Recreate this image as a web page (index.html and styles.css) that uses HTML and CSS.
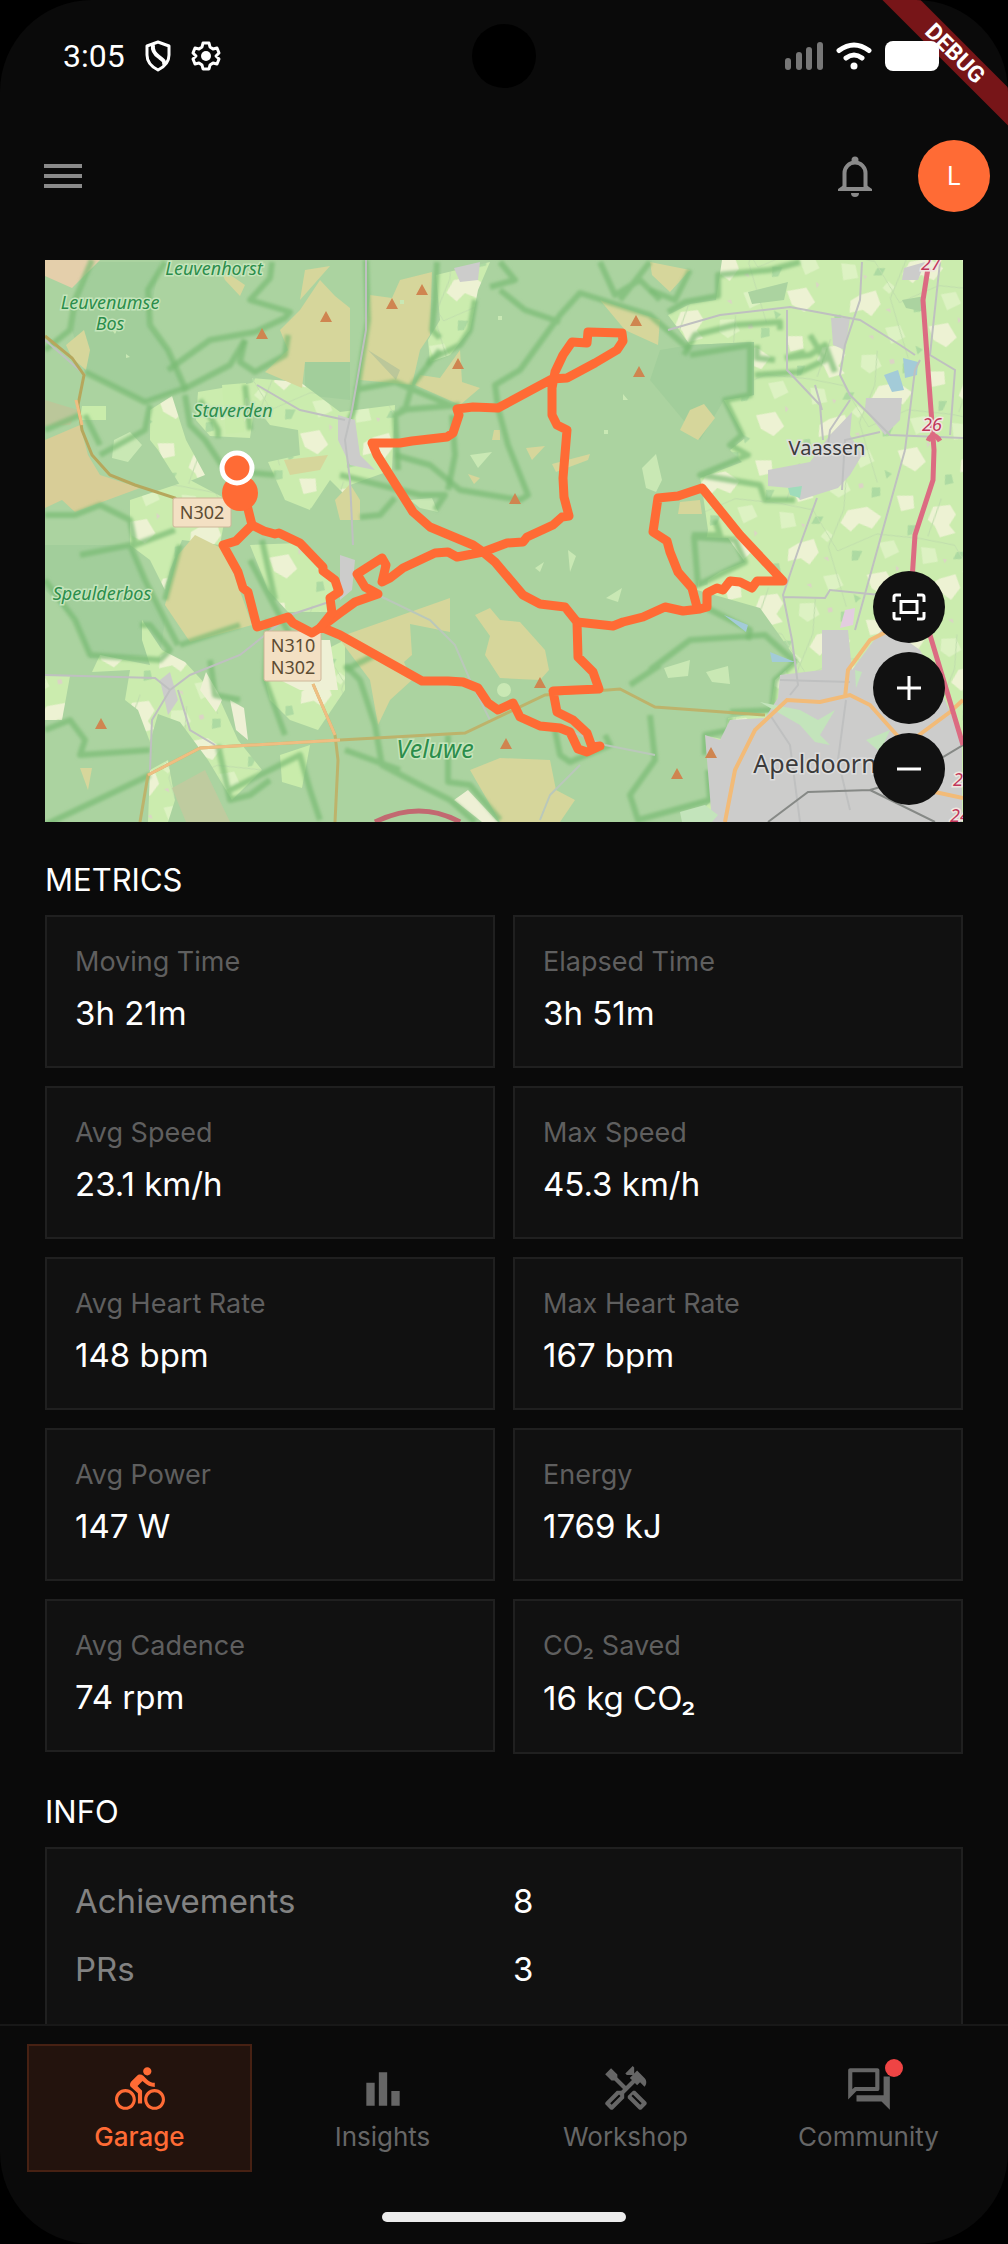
FILE: index.html
```html
<!DOCTYPE html>
<html lang="en">

<head>
    <meta charset="UTF-8">
    <meta name="viewport" content="width=device-width, initial-scale=1.0">
    <title>Ride details</title>
    <link rel="stylesheet" href="styles.css">
</head>

<body>
    <div class="screen">
        <div class="status-bar">
            <div class="status-left">
                <span class="time">3:05</span>
                <svg class="shield" viewBox="0 0 26 32" fill="none" stroke="#fff" stroke-width="3" stroke-linejoin="round">
                    <path d="M13 2L24 6V15C24 22 19 27 13 30C7 27 2 22 2 15V6Z" />
                    <path d="M8 5C7 11 10 14 14 17C18 20 20 21 19 25" stroke-width="4" />
                </svg>
                <svg class="gear" viewBox="0 0 30 30" fill="none" stroke="#fff" stroke-width="3" stroke-linejoin="round">
                    <path d="M12 2H18L19 6L22 8L26 7L28 12L25 15L28 18L26 23L22 22L19 24L18 28H12L11 24L8 22L4 23L2 18L5 15L2 12L4 7L8 8L11 6Z" />
                    <circle cx="15" cy="15" r="5" fill="#fff" stroke="none" />
                </svg>
            </div>
            <div class="camera"></div>
            <div class="status-right">
                <svg class="signal" viewBox="0 0 38 28" fill="#777">
                    <rect x="0" y="16" width="6" height="12" rx="3" />
                    <rect x="11" y="10" width="6" height="18" rx="3" />
                    <rect x="21" y="5" width="6" height="23" rx="3" />
                    <rect x="32" y="0" width="6" height="28" rx="3" />
                </svg>
                <svg class="wifi" viewBox="0 0 36 28" fill="none" stroke="#fff" stroke-width="5" stroke-linecap="round">
                    <path d="M3 8.500Q18 -2.500 33 8.500" />
                    <path d="M10 16Q18 10 26 16" />
                    <circle cx="18" cy="24" r="3.500" fill="#fff" stroke="none" />
                </svg>
                <span class="battery"></span>
            </div>
        </div>
        <div class="debug">DEBUG</div>

        <header class="app-bar">
            <button class="menu-button" aria-label="Menu">
                <svg viewBox="0 0 38 26" fill="#8a8a8a">
                    <path d="M0 1H38V5H0ZM0 11H38V15H0ZM0 21H38V25H0Z" />
                </svg>
            </button>
            <div class="actions">
                <button class="bell-button" aria-label="Notifications">
                    <svg viewBox="0 0 34 41" fill="#8a8a8a">
                        <circle cx="17" cy="4" r="3.500" />
                        <path d="M6.500 32V17A10.500 10.500 0 0 1 27.500 17V32" fill="none" stroke="#8a8a8a" stroke-width="4" />
                        <path d="M0 35V33L5 29.500V31H29V29.500L34 33V35Z" />
                        <path d="M13 37H21A4 4 0 0 1 13 37Z" />
                    </svg>
                </button>
                <button class="avatar">L</button>
            </div>
        </header>

        <main class="content">
            <div class="map">
                <svg class="map-tiles" viewBox="45 260 918 562" preserveAspectRatio="xMidYMid slice">
                    <defs>
                        <pattern id="fields" width="146" height="128" patternUnits="userSpaceOnUse" patternTransform="rotate(14)">
                            <rect width="146" height="128" fill="#cbecae" />
                            <path d="M6 10L22 4L30 12L26 24L34 30L20 38L12 28L4 24ZM70 34L88 26L104 32L98 46L84 44L78 54L66 48ZM30 78L44 70L52 82L46 96L36 92L24 98L22 86ZM104 92L122 84L134 96L126 108L112 104ZM114 8L130 4L134 16L122 22Z" fill="#edf2d3" />
                            <path d="M46 8L60 4L68 14L58 24L48 20ZM108 58L122 52L130 62L118 72ZM4 52L18 50L24 62L10 68ZM62 104L76 98L84 108L72 118ZM54 58L62 62L58 70L50 66Z" fill="#ddf2c3" />
                            <path d="M88 6L96 4L98 12L90 16ZM40 48L48 46L46 54L38 56ZM84 72L94 70L92 80L86 82ZM10 104L16 102L20 110L12 114ZM132 34L140 32L138 42L134 44ZM96 114L104 116L100 122Z" fill="#addaa2" />
                            <path d="M74 6L78 4L80 8L76 10ZM58 86L62 84L64 88ZM130 76L134 78L132 82ZM28 58L32 58L31 62ZM48 116L52 114L54 118Z" fill="#dcd3c6" />
                            <path d="M0 44L36 42L70 76L104 50L146 44M60 0L66 34L60 74L92 128M12 0L8 40" fill="none" stroke="#c0ddad" />
                        </pattern>
                        <filter id="soft" x="-5%" y="-5%" width="110%" height="110%">
                            <feGaussianBlur stdDeviation="1.500" />
                        </filter>
                    </defs>
                    <rect x="45" y="260" width="918" height="562" fill="url(#fields)" />

                    <!-- woods -->
                    <g fill="#abd3a0">
                        <path d="M45 260H722L716 300L690 304L668 315L690 345L754 342V395L724 400L745 438L730 450L742 462L700 478L702 488L708 530L697 590L760 608L797 660L775 680L770 712L728 718L725 740L705 735L712 800L690 822H45Z" />
                        <path d="M694 537L728 538L745 562L720 572L700 585Z" />
                        <path d="M748 292L788 282L784 300L752 304Z" />
                        <path d="M902 300L925 296V312L906 308Z" />
                    </g>
                    <g fill="#a2ce9b">
                        <path d="M92 262H160L148 325L168 350L185 388L145 402L85 372L72 330L76 300Z" />
                        <path d="M45 545L130 545L145 580L165 620L160 655L90 658L75 620L45 590Z" />
                        <path d="M690 345L754 342V395L724 400L700 440L650 380L660 350Z" />
                        <path d="M305 360L350 356V400L305 395Z" />
                    </g>
                    <g fill="url(#fields)">
                        <path d="M252 378L300 382L340 412L395 405L392 470L350 485L350 500L330 480L310 510L285 500L268 462L300 455L298 430L270 425L250 400Z" />
                        <path d="M198 392L258 382L250 438L210 436L196 420Z" />
                        <path d="M130 500L190 480L228 500L220 545L182 540L170 570L165 590L150 560L130 545Z" />
                        <path d="M250 545L300 543L335 582L330 612L288 612L268 590Z" />
                        <path d="M150 410L172 396L186 440L205 475L180 485L158 450L150 440Z" />
                        <path d="M142 620L162 650L185 662L220 700L238 740L262 770L232 800L208 760L180 722L158 714L150 742L138 710L125 700L130 670L92 672L100 655L150 665L142 640Z" />
                        <path d="M265 680L345 640V690L318 730L290 720L270 700Z" />
                        <path d="M436 275L490 262L478 290L470 330L450 355L430 362L428 340L440 320Z" />
                        <path d="M45 675L70 676L62 720L45 720Z" />
                        <path d="M150 770L168 760L175 800L168 822H148Z" />
                    </g>
                    <path d="M82 406H106V420H80ZM280 755L310 745L302 788L282 782ZM222 385L246 383L244 432L226 434Z" fill="#c9ecab" />
                    <path d="M454 800L468 790L498 822H482ZM268 665L300 640L330 640L338 690L300 690L280 680ZM206 672L222 700L216 712L200 690ZM230 700L244 708L248 740L236 730Z" fill="#eef0d5" />

                    <!-- heath and sand -->
                    <g fill="#d6d69b">
                        <path d="M178 555L195 535L225 550L245 605L252 625L190 642L165 605Z" />
                        <path d="M45 440L80 425L88 455L100 475L140 488L75 512L62 500L45 508Z" fill="#d8cd97" />
                        <path d="M45 260H100L72 288L45 276Z" fill="#e4cfab" />
                        <path d="M66 345L84 330L90 350L86 370L72 358Z" />
                        <path d="M280 330L300 310L320 280L335 296L350 308V362H305L302 388L265 372L288 350Z" />
                        <path d="M370 295L392 298L400 280L432 272L430 335L420 350L412 385L360 380Z" />
                        <path d="M420 375L440 378L460 350L462 382L480 388L460 405L415 385Z" />
                        <path d="M345 635L450 598V632L410 624L412 655L404 662L412 680L390 700L378 725L370 680L340 640Z" />
                        <path d="M475 615L490 608L500 620L520 622L545 650L549 670L540 680L500 678L485 655L490 636Z" />
                        <path d="M470 770L500 758L550 760L556 790L575 800L560 822H500Z" />
                        <path d="M650 262L690 270L670 292L652 275ZM600 300L660 320L658 345L625 330ZM220 268L245 285L240 296L225 280ZM305 270L330 266L300 300Z" />
                        <path d="M690 410L704 404L715 418L698 440L680 430Z" />
                        <path d="M335 500L350 484L360 500V520L340 520Z" />
                        <path d="M80 768L92 768L88 790ZM680 502L700 500L702 514L678 514ZM526 448L545 446L532 460ZM284 460L328 455L320 470L290 475ZM468 474L480 478L474 484ZM552 464L590 454L588 460L556 472ZM494 430H500V440H492Z" />
                    </g>
                    <path d="M172 788L205 770L230 822H186Z" fill="#bfcb9f" />
                    <path d="M368 350L400 370L396 380ZM45 400L78 410L70 425L45 426Z" fill="#bbc79a" />

                    <!-- pale clearings -->
                    <g fill="#c9e8b4">
                        <path d="M470 455L492 452L478 468ZM535 568L544 562L540 572ZM568 550L576 556L570 572ZM606 598L622 588L618 602ZM664 668L690 660L688 676L668 678ZM706 672L728 666L730 684L712 682Z" />
                        <path d="M497 690A6 6 0 1 0 511 690A6 6 0 1 0 497 690ZM126 354L130 357L126 358ZM112 330L118 328L115 334ZM400 300H404V304H400ZM498 316H502V320H498ZM623 394L628 400H623ZM604 430H608V434H604Z" />
                        <path d="M642 468L656 454L662 480L656 492L646 488ZM114 440L130 432L142 445L128 462L112 458ZM410 500L432 498L438 512L420 508Z" />
                    </g>

                    <!-- reserve outlines -->
                    <g fill="none" stroke="#79ba74" stroke-width="6" stroke-opacity=".7" stroke-linejoin="round" filter="url(#soft)">
                        <path d="M92 260L75 300L70 330L45 350M85 372L145 402L185 388L168 350L150 325L148 290L165 262" />
                        <path d="M168 370L210 340L255 332L285 318L290 312L250 300L270 278L272 262M245 340L240 362L255 372L285 355L288 335" />
                        <path d="M182 390L230 365L245 340M185 395L190 425L205 440L225 470L275 475M200 400L218 430L218 438M245 385L250 430" />
                        <path d="M45 430L80 415M85 415L100 445M100 455L145 430L150 405M45 515L75 515L100 505L130 520L135 545L175 530" />
                        <path d="M80 555L130 545L145 580L165 620L178 645M45 580L75 620L90 655L160 660L170 650L150 625L140 625M180 645L240 625M180 545L165 600" />
                        <path d="M45 730L70 720L85 740L80 755L150 750M45 825L150 775M210 660L215 695L240 700M250 560L290 635M262 540L275 600" />
                        <path d="M268 620L265 680L285 735M218 745L230 800L250 795L270 780M230 790L300 755L310 790L320 820" />
                        <path d="M366 260L368 320L354 410L345 430M354 390L395 382L450 405M400 410L460 405M440 350L412 385L405 410L395 415L398 470M452 415L455 455L448 490" />
                        <path d="M498 408L508 445L528 495L520 500L460 490L430 465L395 455M498 408L495 385L520 370L560 315L580 293L650 315L690 350M500 290L525 310L560 322" />
                        <path d="M437 262L435 300L432 330L440 338M475 300L470 330L460 345L430 360L428 365M500 262L515 280L490 287" />
                        <path d="M340 475L420 495L445 495L435 510M360 517L380 515L395 498M600 262L615 295L640 280L660 300M620 300L650 262" />
                        <path d="M650 290L675 300L690 270M668 312L685 302L718 296V275L770 270L800 262M684 355L695 335L735 325L780 322V330M690 355L750 345V395L725 400L742 435L730 445L748 455L700 475L760 485L765 500L795 500" />
                        <path d="M757 345V358L775 360M785 358L810 355L825 345L835 372M755 375L800 372L825 360L810 335M785 358L805 352" />
                        <path d="M694 537L698 585L745 562L735 540ZM692 535L720 535L715 520M707 608L750 630L748 640" />
                        <path d="M650 670L690 640L765 635L795 662L775 680L772 710L730 712M650 715L655 760L630 795L638 820L710 800L708 770M630 685L660 665" />
                        <path d="M345 665L360 680L375 725L382 765L420 785L450 800L475 822M448 735V782L470 785L500 820M345 750L400 770M555 730L560 755L570 762L610 745L605 735" />
                        <path d="M730 718V730L705 735V755M345 670L375 655" />
                    </g>

                    <!-- towns -->
                    <g fill="#cccccb">
                        <path d="M338 415L355 420L360 455L375 470L350 465L338 440Z" />
                        <path d="M340 555L355 560L352 590L340 600ZM160 680L170 672L178 700L168 715ZM454 268L480 262L478 280L460 282Z" />
                        <path d="M866 398L902 398L900 420L885 435L865 410ZM830 435L852 412L850 435L862 455L850 475L838 488L800 500L790 488L768 486V470L810 462Z" />
                        <path d="M831 318H850L845 350L833 345ZM904 268L925 262L918 280L902 280Z" />
                        <path d="M822 630L848 630L852 670L885 625L920 650L945 700L962 740V822H712L705 735L720 740L730 720L765 718L778 698L780 675L822 670Z" />
                    </g>
                    <g fill="#c3e4bb">
                        <path d="M760 702L800 710L818 720L835 710L820 735L830 745L815 742L800 725ZM855 670L862 672L856 688ZM866 740L890 730L880 752ZM680 812L705 805L718 815L712 822H682Z" />
                    </g>
                    <path d="M903 358L918 362L917 375L905 378ZM884 375L898 370L904 390L892 392ZM724 615L748 625L746 632ZM770 652L795 662L772 662Z" fill="#a3cbd8" />
                    <path d="M845 610L855 608L853 625L840 628Z" fill="#e3cde0" />
                    <path d="M788 488L802 486L800 498L790 495Z" fill="#9fdcbb" />

                    <!-- minor roads -->
                    <g fill="none" stroke="#bfc0c0" stroke-width="2">
                        <path d="M366 260L366 330L352 410L345 440L350 480L353 545M257 385L300 410L345 420" />
                        <path d="M45 675L155 678L170 690L190 675L240 655L265 635L290 615L335 600M170 690L152 720L150 770M178 690L190 730L215 745" />
                        <path d="M380 596L430 620L455 645L470 680L490 720M555 725L605 745L655 755M580 765L550 795L540 820" stroke="#bac8ba" />
                        <path d="M668 330L720 315L790 307L860 320L900 345L915 355M862 262L860 300L845 345L840 375L850 395L890 435L963 438M850 400L830 430L828 445M815 385L822 410M787 310V370L820 405L823 440" />
                        <path d="M817 498L800 545L783 595L792 640L798 685L790 695M905 450L880 540L855 630M783 597L825 598L830 590L880 595M842 490L845 440L880 432" />
                        <path d="M846 700L838 760L850 810M770 715L790 745L800 822M780 680L850 682M920 360L915 370L905 450M940 262L930 355L955 370L950 435" />
                        <path d="M45 340L85 375" />
                    </g>
                    <path d="M768 822L808 792L870 790L905 780L963 745M870 790L935 822" fill="none" stroke="#868986" stroke-width="2" />

                    <!-- main roads -->
                    <g fill="none" stroke="#d0b365" stroke-width="3">
                        <path d="M45 336L72 358L84 375L78 405L82 430L92 455L110 475L135 485L175 498L180 505" stroke="#b6a75c" />
                        <path d="M313 684L335 735L338 760L335 822M140 822L148 775L200 748L340 740L465 733L545 695L620 689L655 707L765 715" stroke="#bdb36b" />
                        <path d="M200 748L340 740M313 684L335 735M148 775L200 748M76 400L82 425" stroke="#efbe82" />
                    </g>
                    <path d="M725 822L735 770L755 730L787 700L820 702L850 695L870 705L895 733L910 750M845 697L848 670L870 640L900 625M915 738L950 712L963 700M935 792L963 798" fill="none" stroke="#f2bb78" stroke-width="4" />
                    <path d="M928 268L923 300L928 370L934 450L933 480L915 535L912 580L930 635L963 745" fill="none" stroke="#dc6b82" stroke-width="5" />
                    <path d="M375 822Q420 800 460 822" fill="none" stroke="#c26971" stroke-width="5" />
                    <path d="M928 441Q933 430 940 441" fill="none" stroke="#dc6b82" stroke-width="5" />

                    <!-- hill tops -->
                    <path d="M262 328l6 11h-12zM326 311l6 11h-12zM392 298l6 11h-12zM422 284l6 11h-12zM458 358l6 11h-12zM515 493l6 11h-12zM636 315l6 11h-12zM639 366l6 11h-12zM101 718l6 11h-12zM540 677l6 11h-12zM506 738l6 11h-12zM711 747l6 11h-12zM677 768l6 11h-12z" fill="#cf8550" />

                    <!-- place names -->
                    <g class="nature">
                        <text x="214" y="275">Leuvenhorst</text>
                        <text x="110" y="309">Leuvenumse</text>
                        <text x="110" y="330">Bos</text>
                        <text x="233" y="417">Staverden</text>
                        <text x="102" y="600">Speulderbos</text>
                        <text class="large" x="435" y="758">Veluwe</text>
                    </g>
                    <g class="town">
                        <text x="827" y="455">Vaassen</text>
                        <text class="large" x="815" y="773">Apeldoorn</text>
                    </g>
                    <g class="junction">
                        <text x="931" y="270">27</text>
                        <text x="932" y="431">26</text>
                        <text x="963" y="786">25</text>
                        <text x="960" y="822">24</text>
                    </g>
                    <g class="road-sign">
                        <rect x="173" y="498" width="58" height="29" rx="2" />
                        <text x="202" y="519">N302</text>
                        <rect x="264" y="631" width="57" height="50" rx="2" />
                        <text x="293" y="652">N310</text>
                        <text x="293" y="674">N302</text>
                    </g>

                    <!-- ridden track -->
                    <g fill="none" stroke="#ff6b35" stroke-width="9" stroke-linecap="round" stroke-linejoin="round">
                        <path d="M247 505L252 525L243 534L236 541L223 545L238 572L243 588L248 592L257 627L288 617L293 623L312 633L320 628L340 613L355 602L378 594L365 587L357 574L382 558L386 565L382 582L390 578L403 568L435 553L448 552L457 557L483 552L507 543L523 542L527 537L553 525L562 517L569 516L564 497L563 478L567 430L557 425L552 415V388L555 372L563 355L572 342L587 343L588 332L622 333L623 341L617 350L595 363L567 378L552 379L537 387L498 408L473 407L457 409L459 415L453 433L447 437L412 441L400 443L372 443L377 455L413 512L430 527L473 545L483 552L495 562L523 595L540 604L565 607L577 622L578 657L593 672L599 689L553 691L557 712L573 720L587 733L592 747L600 746L587 752L578 749L570 732L560 728L540 726L520 717L513 703L498 710L488 703L478 688L463 682L448 681L422 681L340 635L321 627" />
                        <path d="M252 525L264 531L275 534L279 533L300 543L323 567V571L335 580L339 592L330 598L332 613L320 628" />
                        <path d="M577 622L613 626L623 622L643 617L665 607L683 611L700 609L707 607V593L717 588L723 590L730 581L740 582L752 588L757 581L783 581L740 535L702 488L678 496L658 498L653 532L667 541L670 552L678 572L692 588L697 607" />
                    </g>
                    <circle cx="240" cy="493" r="18" fill="#ff6b35" />
                    <circle cx="237" cy="468" r="15" fill="#ff6b35" stroke="#fff" stroke-width="5" />
                </svg>
                <div class="map-controls">
                    <button aria-label="Fit route">
                        <svg viewBox="0 0 36 36" fill="none" stroke="#fff" stroke-width="3">
                            <path d="M3 13V8Q3 6 5 6H10M26 6H31Q33 6 33 8V13M33 23V28Q33 30 31 30H26M10 30H5Q3 30 3 28V23" />
                            <rect x="10" y="12.500" width="16" height="11" />
                        </svg>
                    </button>
                    <button aria-label="Zoom in">
                        <svg viewBox="0 0 36 36" fill="none" stroke="#fff" stroke-width="3">
                            <path d="M6 18H30M18 6V30" />
                        </svg>
                    </button>
                    <button aria-label="Zoom out">
                        <svg viewBox="0 0 36 36" fill="none" stroke="#fff" stroke-width="3">
                            <path d="M6 18H30" />
                        </svg>
                    </button>
                </div>
            </div>

            <h2>METRICS</h2>
            <dl class="metrics">
                <div class="card">
                    <dt>Moving Time</dt>
                    <dd>3h 21m</dd>
                </div>
                <div class="card">
                    <dt>Elapsed Time</dt>
                    <dd>3h 51m</dd>
                </div>
                <div class="card">
                    <dt>Avg Speed</dt>
                    <dd>23.1 km/h</dd>
                </div>
                <div class="card">
                    <dt>Max Speed</dt>
                    <dd>45.3 km/h</dd>
                </div>
                <div class="card">
                    <dt>Avg Heart Rate</dt>
                    <dd>148 bpm</dd>
                </div>
                <div class="card">
                    <dt>Max Heart Rate</dt>
                    <dd>167 bpm</dd>
                </div>
                <div class="card">
                    <dt>Avg Power</dt>
                    <dd>147 W</dd>
                </div>
                <div class="card">
                    <dt>Energy</dt>
                    <dd>1769 kJ</dd>
                </div>
                <div class="card">
                    <dt>Avg Cadence</dt>
                    <dd>74 rpm</dd>
                </div>
                <div class="card co2">
                    <dt>CO₂ Saved</dt>
                    <dd>16 kg CO₂</dd>
                </div>
            </dl>

            <h2>INFO</h2>
            <dl class="info">
                <dt>Achievements</dt>
                <dd>8</dd>
                <dt>PRs</dt>
                <dd>3</dd>
                <dt>Bike</dt>
                <dd>Canyon Endurace</dd>
            </dl>
        </main>

        <footer>
            <nav class="tabs">
                <a href="#garage" class="tab active">
                    <svg viewBox="0 0 24 24">
                        <path d="M15.5 5.5c1.1 0 2-.9 2-2s-.9-2-2-2-2 .9-2 2 .9 2 2 2zM5 12c-2.800 0-5 2.200-5 5s2.200 5 5 5 5-2.200 5-5-2.200-5-5-5zm0 8.500c-1.900 0-3.500-1.600-3.500-3.500s1.600-3.500 3.500-3.500 3.500 1.600 3.500 3.500-1.600 3.500-3.500 3.500zm5.800-10l2.400-2.400.8.8c1.300 1.300 3 2.100 5.100 2.100V9c-1.500 0-2.700-.6-3.600-1.500l-1.900-1.900c-.5-.4-1-.6-1.600-.6s-1.100.2-1.400.6L7.800 8.400c-.4.4-.6.9-.6 1.400 0 .6.2 1.100.6 1.400L11 14v5h2v-6.200l-2.200-2.300zM19 12c-2.800 0-5 2.200-5 5s2.200 5 5 5 5-2.200 5-5-2.200-5-5-5zm0 8.500c-1.900 0-3.500-1.600-3.500-3.500s1.600-3.500 3.500-3.500 3.500 1.600 3.500 3.500-1.600 3.500-3.500 3.500z" />
                    </svg>
                    <span>Garage</span>
                </a>
                <a href="#insights" class="tab">
                    <svg viewBox="0 0 24 24">
                        <path d="M4 9h4v11H4zM10 4h4v16h-4zM16 13h4v7h-4z" />
                    </svg>
                    <span>Insights</span>
                </a>
                <a href="#workshop" class="tab">
                    <svg viewBox="0 0 24 24">
                        <path d="M21.67 18.17l-5.3-5.3h-.99l-2.54 2.54v.99l5.3 5.3c.39.39 1.02.39 1.41 0l2.12-2.12c.39-.38.39-1.02 0-1.41zm-2.83 1.42l-4.24-4.24.71-.71 4.24 4.24-.71.71z" />
                        <path d="M17.34 10.19l1.41-1.41 2.12 2.12c1.17-1.17 1.17-3.07 0-4.24l-3.54-3.54-1.41 1.41V1.71L15.22 1l-3.54 3.54.71.71h2.83l-1.41 1.41 1.06 1.06-2.89 2.89-4.13-4.13V5.06L4.83 2.04 2 4.87 5.03 7.9h1.41l4.13 4.13-.85.85H7.6l-5.3 5.3c-.39.39-.39 1.02 0 1.41l2.12 2.12c.39.39 1.02.39 1.41 0l5.3-5.3v-2.12l5.15-5.15 1.06 1.05zm-7.98 5.15l-4.24 4.24-.71-.71 4.24-4.24.71.71z" />
                    </svg>
                    <span>Workshop</span>
                </a>
                <a href="#community" class="tab">
                    <span class="badge-wrap">
                        <svg viewBox="0 0 24 24">
                            <path d="M15 4v7H5.170L4 12.170V4h11m1-2H3c-.55 0-1 .45-1 1v14l4-4h10c.55 0 1-.45 1-1V3c0-.55-.45-1-1-1zM22 6h-3v9H6v3h12l4 4z" />
                        </svg>
                        <span class="badge"></span>
                    </span>
                    <span>Community</span>
                </a>
            </nav>
            <div class="home-bar"></div>
        </footer>
    </div>
</body>

</html>
```

FILE: styles.css
```css
* {
    box-sizing: border-box;
}

body {
    margin: 0;
    background: #000;
    color: #fff;
    font-family: 'Inter', sans-serif;
}

button {
    border: none;
    padding: 0;
    background: none;
    color: inherit;
    font-family: inherit;
    cursor: pointer;
}

svg {
    display: block;
}

.screen {
    position: relative;
    display: flex;
    flex-direction: column;
    height: 100vh;
    overflow: hidden;
    border-radius: 92px;
    background: #0a0a0a;
}

/* Status bar */
.status-bar {
    display: grid;
    grid-template-columns: 1fr 64px 1fr;
    align-items: center;
    height: 112px;
    padding: 0 63px;
    flex-shrink: 0;
}

.status-left,
.status-right {
    display: flex;
    align-items: center;
}

.status-left {
    gap: 20px;
}

.status-right {
    position: relative;
    z-index: 2;
    justify-content: flex-end;
    gap: 13px;
}

.time {
    font-family: 'Roboto', sans-serif;
    font-size: 32px;
}

.shield {
    width: 26px;
    height: 32px;
}

.gear {
    width: 30px;
    height: 30px;
}

.camera {
    width: 64px;
    height: 64px;
    border-radius: 50%;
    background: #000;
}

.signal {
    width: 38px;
    height: 28px;
}

.wifi {
    width: 36px;
    height: 28px;
}

.battery {
    width: 54px;
    height: 30px;
    margin-right: 6px;
    border-radius: 8px;
    background: #fff;
}

.debug {
    position: absolute;
    top: 40px;
    right: -47px;
    width: 200px;
    background: #771518;
    font-family: 'Roboto', sans-serif;
    font-size: 23px;
    font-weight: 700;
    line-height: 27px;
    text-align: center;
    transform: rotate(45deg);
}

/* App bar */
.app-bar {
    display: flex;
    align-items: center;
    justify-content: space-between;
    height: 128px;
    padding: 0 18px 0 44px;
    flex-shrink: 0;
}

.menu-button svg {
    width: 38px;
    height: 26px;
}

.actions {
    display: flex;
    align-items: center;
    gap: 46px;
}

.bell-button svg {
    width: 34px;
    height: 41px;
}

.avatar {
    width: 72px;
    height: 72px;
    border-radius: 50%;
    background: #ff6b35;
    font-size: 25px;
}

/* Content */
.content {
    flex: 1;
    min-height: 0;
    overflow: hidden;
    padding: 20px 45px 0;
}

.map {
    position: relative;
}

.map-tiles {
    width: 100%;
}

.map-tiles text {
    font-family: 'Noto Sans', sans-serif;
    font-size: 17px;
    text-anchor: middle;
    paint-order: stroke;
    stroke-width: 3px;
}

.nature text {
    fill: #2b8d4b;
    stroke: #c5e5bb;
    font-size: 18px;
    font-style: italic;
}

.town text {
    fill: #3b3b3b;
    stroke: #dedede;
    font-size: 20px;
}

.nature .large,
.town .large {
    font-size: 25px;
}

.junction text {
    fill: #c1365a;
    stroke: #f0e6e0;
    font-size: 18px;
    font-style: italic;
}

.road-sign rect {
    fill: #f3e0c3;
    stroke: #cdb698;
}

.road-sign text {
    fill: #5d4c33;
    stroke: none;
    font-size: 18px;
}

.map-controls {
    position: absolute;
    right: 18px;
    bottom: 17px;
    display: flex;
    flex-direction: column;
    gap: 9px;
}

.map-controls button {
    display: flex;
    align-items: center;
    justify-content: center;
    width: 72px;
    height: 72px;
    border-radius: 50%;
    background: #111;
}

.map-controls svg {
    width: 36px;
    height: 36px;
}

h2 {
    margin: 37px 0 14px;
    font-size: 31px;
    font-weight: 400;
    line-height: 42px;
}

dl,
dd {
    margin: 0;
}

.metrics {
    display: grid;
    grid-template-columns: 1fr 1fr;
    align-items: start;
    gap: 18px;
}

.card,
.info {
    border: 2px solid #202020;
    background: #111;
}

.card {
    padding: 28px;
}

.card dt {
    margin-bottom: 10px;
    color: #5f5f5f;
    font-size: 27px;
    line-height: 34px;
}

.card dd {
    font-size: 33px;
    line-height: 49px;
}

.co2 dd {
    line-height: 51px;
}

.info {
    display: grid;
    grid-template-columns: 1fr 1fr;
    gap: 19px 18px;
    padding: 28px;
    font-size: 33px;
    line-height: 49px;
}

.info dt {
    color: #828282;
}

/* Bottom navigation */
footer {
    flex-shrink: 0;
    padding: 18px 27px 22px;
    border-top: 2px solid #181818;
}

.tabs {
    display: grid;
    grid-template-columns: repeat(4, 1fr);
    gap: 18px;
}

.tab {
    display: flex;
    flex-direction: column;
    align-items: center;
    gap: 6px;
    height: 128px;
    padding-top: 18px;
    border: 2px solid transparent;
    color: #666;
    font-size: 26px;
    line-height: 34px;
    text-decoration: none;
}

.tab svg {
    width: 50px;
    height: 50px;
    fill: currentColor;
}

.active {
    border-color: #472113;
    background: #23130d;
    color: #ff6b35;
    font-weight: 500;
}

.badge-wrap {
    position: relative;
}

.badge {
    position: absolute;
    top: -5px;
    right: -9px;
    width: 18px;
    height: 18px;
    border-radius: 50%;
    background: #ef4444;
}

.home-bar {
    width: 244px;
    height: 10px;
    margin: 40px auto 0;
    border-radius: 5px;
    background: #ececec;
}
```
